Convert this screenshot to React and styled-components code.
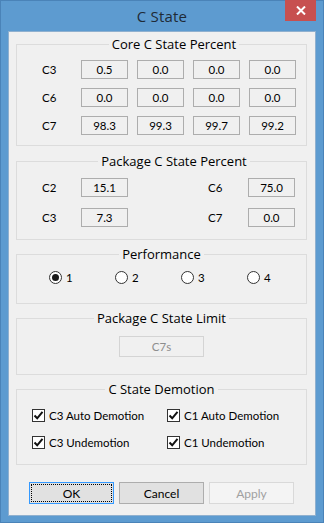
import React from 'react';
import styled, { createGlobalStyle } from 'styled-components';

const GlobalStyle = createGlobalStyle`
    html, body {
        margin: 0;
        padding: 0;
        background: #5d9bd0;
    }
    body {
        font-family: "Open Sans", "Noto Sans", "Liberation Sans", sans-serif;
    }
`;

const Window = styled.div`
    width: 324px;
    height: 523px;
    display: flex;
    flex-direction: column;
    background: #5d9bd0;
    box-sizing: border-box;
    border: 1px solid #4a83b8;
`;

const TitleBar = styled.div`
    height: 30px;
    display: flex;
    align-items: flex-start;
    justify-content: center;
    position: relative;
`;

const Caption = styled.div`
    margin-top: 5px;
    font-size: 15px;
    line-height: 20px;
    color: #1f2a36;
    letter-spacing: 0.2px;
`;

const CloseButton = styled.div`
    position: absolute;
    top: -1px;
    right: 7px;
    width: 31px;
    height: 21px;
    background: #c75050;
    display: flex;
    align-items: center;
    justify-content: center;
`;

const Client = styled.div`
    margin: 0 7px 6px 7px;
    flex: 1;
    background: #f0f0f0;
    border: 1px solid #8fb0cf;
    display: flex;
    flex-direction: column;
    padding: 0 8px 0 7px;
    font-family: "Lato", "Liberation Sans", sans-serif;
    font-size: 11.5px;
    color: #000;
`;

const Group = styled.div`
    margin-top: ${p => p.$top}px;
    border: 1px solid #dcdcdc;
    display: flex;
    flex-direction: column;
    padding: 0 0 ${p => p.$bottom}px ${p => p.$left || 0}px;
`;

const Legend = styled.div`
    align-self: center;
    margin-top: -9px;
    padding: 0 3px;
    background: #f0f0f0;
    font-family: "Open Sans", "Noto Sans", sans-serif;
    font-size: 13px;
    line-height: 17px;
    color: #000;
`;

const CoreGrid = styled.div`
    margin-top: 7px;
    display: grid;
    grid-template-columns: 30px repeat(4, 47px);
    column-gap: 9px;
    row-gap: 9px;
    align-items: center;
`;

const PackageGrid = styled.div`
    margin-top: 8px;
    display: grid;
    grid-template-columns: 39px 47px 80px 40px 47px;
    row-gap: 11px;
    align-items: center;
`;

const Label = styled.span`
    line-height: 15px;
`;

const ValueBox = styled.div`
    box-sizing: border-box;
    width: ${p => p.$width || 47}px;
    height: ${p => p.$height || 19}px;
    border: 1px solid ${p => (p.$disabled ? '#d4d4d4' : '#adadad')};
    display: flex;
    align-items: center;
    justify-content: center;
    color: ${p => (p.$disabled ? '#8d8d8d' : '#000')};
`;

const RadioRow = styled.div`
    margin-top: 8px;
    display: grid;
    grid-template-columns: repeat(4, 66px);
    padding-left: 32px;
`;

const Option = styled.label`
    display: flex;
    align-items: center;
    gap: 4px;
    line-height: 13px;
`;

const RadioDot = styled.span`
    box-sizing: border-box;
    width: 13px;
    height: 13px;
    border-radius: 50%;
    border: 1px solid #333;
    background: #fff;
    display: flex;
    align-items: center;
    justify-content: center;
    &::after {
        content: '';
        width: 7px;
        height: 7px;
        border-radius: 50%;
        background: ${p => (p.$checked ? '#1a1a1a' : 'transparent')};
    }
`;

const LimitRow = styled.div`
    margin-top: 9px;
    display: flex;
    justify-content: center;
`;

const CheckGrid = styled.div`
    margin-top: 11px;
    display: grid;
    grid-template-columns: 135px 120px;
    row-gap: 14px;
    padding-left: 15px;
`;

const CheckBox = styled.span`
    box-sizing: border-box;
    width: 13px;
    height: 13px;
    border: 1px solid #333;
    background: #fff;
    display: flex;
    align-items: center;
    justify-content: center;
`;

const ButtonRow = styled.div`
    margin-top: 17px;
    display: flex;
    justify-content: center;
    gap: 5px;
`;

const Button = styled.div`
    box-sizing: border-box;
    width: 85px;
    height: 22px;
    background: ${p => (p.$disabled ? '#f4f4f4' : '#e1e1e1')};
    border: 1px solid ${p => (p.$default ? '#3399ff' : p.$disabled ? '#d9d9d9' : '#adadad')};
    color: ${p => (p.$disabled ? '#a0a0a0' : '#000')};
    display: flex;
    align-items: center;
    justify-content: center;
    font-size: 12px;
    position: relative;
    ${p => p.$default && `
        &::before {
            content: '';
            position: absolute;
            inset: 1px;
            border: 1px dotted #000;
        }
    `}
`;

const core = [
    ['C3', ['0.5', '0.0', '0.0', '0.0']],
    ['C6', ['0.0', '0.0', '0.0', '0.0']],
    ['C7', ['98.3', '99.3', '99.7', '99.2']],
];

const pkg = [
    ['C2', '15.1', 'C6', '75.0'],
    ['C3', '7.3', 'C7', '0.0'],
];

const checks = ['C3 Auto Demotion', 'C1 Auto Demotion', 'C3 Undemotion', 'C1 Undemotion'];

const Tick = () => (
    <svg width="11" height="11" viewBox="0 0 11 11">
        <path d="M1.5 5.5 L4.2 8.3 L9.5 1.8" fill="none" stroke="#111" strokeWidth="2" />
    </svg>
);

const App = () => (
    <>
        <GlobalStyle />
        <Window>
            <TitleBar>
                <Caption>C State</Caption>
                <CloseButton>
                    <svg width="10" height="9" viewBox="0 0 10 9">
                        <path d="M1 0.5 L9 8.5 M9 0.5 L1 8.5" stroke="#fff" strokeWidth="2" />
                    </svg>
                </CloseButton>
            </TitleBar>
            <Client>
                <Group $top={12} $bottom={10} $left={25}>
                    <Legend>Core C State Percent</Legend>
                    <CoreGrid>
                        {core.map(([name, vals]) => (
                            <React.Fragment key={name}>
                                <Label>{name}</Label>
                                {vals.map((v, i) => <ValueBox key={i}>{v}</ValueBox>)}
                            </React.Fragment>
                        ))}
                    </CoreGrid>
                </Group>

                <Group $top={15} $bottom={12} $left={25}>
                    <Legend>Package C State Percent</Legend>
                    <PackageGrid>
                        {pkg.map(([a, av, b, bv]) => (
                            <React.Fragment key={a}>
                                <Label>{a}</Label>
                                <ValueBox>{av}</ValueBox>
                                <span />
                                <Label>{b}</Label>
                                <ValueBox>{bv}</ValueBox>
                            </React.Fragment>
                        ))}
                    </PackageGrid>
                </Group>

                <Group $top={14} $bottom={19}>
                    <Legend>Performance</Legend>
                    <RadioRow>
                        {['1', '2', '3', '4'].map((n, i) => (
                            <Option key={n}>
                                <RadioDot $checked={i === 0} />
                                {n}
                            </Option>
                        ))}
                    </RadioRow>
                </Group>

                <Group $top={14} $bottom={17}>
                    <Legend>Package C State Limit</Legend>
                    <LimitRow>
                        <ValueBox $width={85} $height={21} $disabled>C7s</ValueBox>
                    </LimitRow>
                </Group>

                <Group $top={14} $bottom={15}>
                    <Legend>C State Demotion</Legend>
                    <CheckGrid>
                        {checks.map(c => (
                            <Option key={c}>
                                <CheckBox><Tick /></CheckBox>
                                {c}
                            </Option>
                        ))}
                    </CheckGrid>
                </Group>

                <ButtonRow>
                    <Button $default>OK</Button>
                    <Button>Cancel</Button>
                    <Button $disabled>Apply</Button>
                </ButtonRow>
            </Client>
        </Window>
    </>
);

export default App;
